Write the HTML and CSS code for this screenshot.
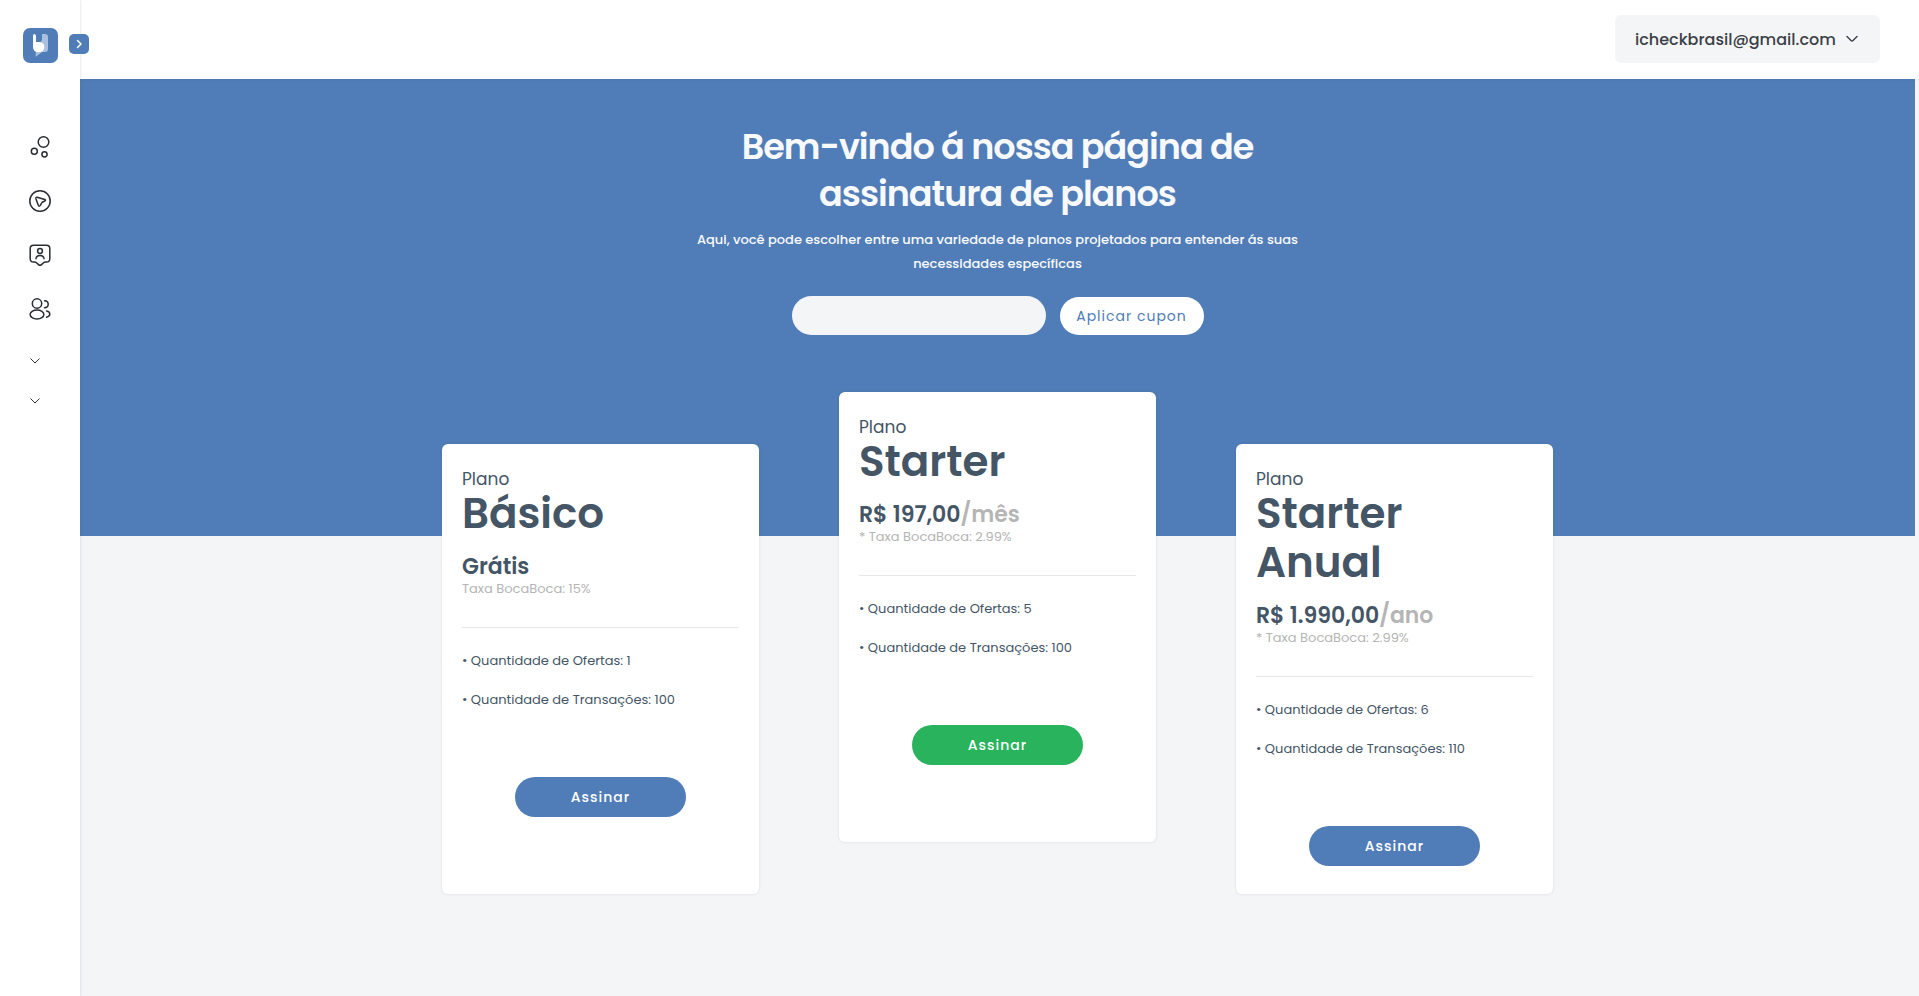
FILE: index.html
```html
<!DOCTYPE html>
<html lang="pt-BR">
<head>
<meta charset="utf-8">
<meta name="viewport" content="width=device-width, initial-scale=1">
<title>Planos</title>
<link rel="stylesheet" href="styles.css">
</head>
<body>
<div class="app">
  <aside class="sidebar">
    <a class="logo" href="#" aria-label="Início">
      <svg width="35" height="35" viewBox="0 0 35 35">
        <rect width="35" height="35" rx="7" fill="#507db7"/>
        <path d="M18 6h4q3 0 3 3v12q0 3-3 3h-2.500q-1 .3-2 1.200l-4.800 3.500V24L17 19z" fill="#a9c0df"/>
        <path d="M13 6h6v5q0 3-3 3h-3z" fill="#507db7"/>
        <path d="M10 7.500Q10 6 11.500 6q1.500.5 1.500 2v6h3.500q4.800.3 4.800 5t-5.300 5.300q-6 0-6-5.300z" fill="#fff"/>
      </svg>
    </a>
    <button class="expand" type="button" aria-label="Expandir menu">
      <svg width="20" height="20" viewBox="0 0 20 20"><path d="M8.500 6.500l3.500 3.500-3.500 3.500" fill="none" stroke="#fff" stroke-width="1.500" stroke-linecap="round" stroke-linejoin="round"/></svg>
    </button>
    <nav class="menu">
      <a class="menu-link" href="#" aria-label="Painel">
        <svg class="icon" viewBox="0 0 24 24"><circle cx="15.500" cy="7" r="5.300"/><circle cx="6.300" cy="16.300" r="3"/><circle cx="16.500" cy="19.300" r="2.600"/></svg>
      </a>
      <a class="menu-link" href="#" aria-label="Ofertas">
        <svg class="icon" viewBox="0 0 24 24"><circle cx="12" cy="12" r="10.200"/><path d="M9.200 8.200l7.500 2.300q1.500.6.200 1.500l-2.700 1.200-1.900 3.200q-1.200 1.600-2-.1L7.900 9.700q-.2-1.800 1.300-1.500z"/></svg>
      </a>
      <a class="menu-link" href="#" aria-label="Perfil">
        <svg class="icon" viewBox="0 0 24 24"><path d="M5.500 2.200h13q3.300 0 3.300 3.300v10.200q0 3.300-3.300 3.300h-1q-1.200 0-2 .8l-2 1.800q-1.500 1.300-3 0l-2-1.800q-.8-.8-2-.8h-1q-3.300 0-3.300-3.300V5.500q0-3.300 3.300-3.300z"/><circle cx="12" cy="8" r="2.400"/><path d="M8 15.800q.3-3.200 4-3.200t4 3.200"/></svg>
      </a>
      <a class="menu-link" href="#" aria-label="Clientes">
        <svg class="icon" viewBox="0 0 24 24"><circle cx="9" cy="6.500" r="4.700"/><ellipse cx="9" cy="17.500" rx="6.900" ry="4.500"/><path d="M16.500 3.800q3.700.2 3.700 3.500t-3.700 3.500M18.500 14q3.300.6 3.300 3.100t-3.300 3.100"/></svg>
      </a>
    </nav>
    <div class="groups">
      <button class="group" type="button" aria-label="Abrir grupo 1"><svg width="10" height="6" viewBox="0 0 10 6"><path d="M.5.500L5 5 9.500.500" fill="none" stroke="#30343b"/></svg></button>
      <button class="group" type="button" aria-label="Abrir grupo 2"><svg width="10" height="6" viewBox="0 0 10 6"><path d="M.5.500L5 5 9.500.500" fill="none" stroke="#30343b"/></svg></button>
    </div>
  </aside>
  <div class="page">
    <header class="topbar">
      <button class="account" type="button">icheckbrasil@gmail.com
        <svg width="12" height="8" viewBox="0 0 12 8"><path d="M1 1.500l4 4q1 1 2 0l4-4" fill="none" stroke="#3b3f46" stroke-width="1.400" stroke-linecap="round"/></svg>
      </button>
    </header>
    <main class="content">
      <section class="hero">
        <h1 class="hero-title">Bem-vindo á nossa página de assinatura de planos</h1>
        <p class="hero-text">Aqui, você pode escolher entre uma variedade de planos projetados para entender ás suas necessidades específicas</p>
        <form class="coupon">
          <input class="coupon-input" type="text" aria-label="Cupom">
          <button class="coupon-button" type="button">Aplicar cupon</button>
        </form>
      </section>
      <section class="plans">
        <article class="card">
          <p class="label">Plano</p>
          <h2 class="name">Básico</h2>
          <p class="price">Grátis</p>
          <p class="fee">Taxa BocaBoca: 15%</p>
          <hr class="rule">
          <ul class="features"><li>• Quantidade de Ofertas: 1</li><li>• Quantidade de Transações: 100</li></ul>
          <button class="subscribe" type="button">Assinar</button>
        </article>
        <article class="card card-featured">
          <p class="label">Plano</p>
          <h2 class="name">Starter</h2>
          <p class="price">R$ 197,00<span class="period">/mês</span></p>
          <p class="fee">* Taxa BocaBoca: 2.99%</p>
          <hr class="rule">
          <ul class="features"><li>• Quantidade de Ofertas: 5</li><li>• Quantidade de Transações: 100</li></ul>
          <button class="subscribe subscribe-green" type="button">Assinar</button>
        </article>
        <article class="card">
          <p class="label">Plano</p>
          <h2 class="name">Starter<br>Anual</h2>
          <p class="price">R$ 1.990,00<span class="period">/ano</span></p>
          <p class="fee">* Taxa BocaBoca: 2.99%</p>
          <hr class="rule">
          <ul class="features"><li>• Quantidade de Ofertas: 6</li><li>• Quantidade de Transações: 110</li></ul>
          <button class="subscribe" type="button">Assinar</button>
        </article>
      </section>
    </main>
  </div>
</div>
</body>
</html>
```
FILE: styles.css
```css
* { box-sizing: border-box; }
body, h1, h2, p, ul { margin: 0; padding: 0; }
body {
  font-family: Poppins, Inter, "Liberation Sans", sans-serif;
  color: #445566;
  background: #f4f5f7;
}
button, input { font: inherit; border: 0; padding: 0; }
button { cursor: pointer; }
svg { display: block; }
ul { list-style: none; }

.app { display: flex; min-height: 100vh; }

.sidebar {
  position: relative;
  z-index: 2;
  flex: 0 0 80px;
  padding-top: 28px;
  background: #fff;
  box-shadow: 0 0 3px rgba(60, 72, 88, .2);
}
.logo { display: block; width: 35px; margin-left: 23px; }
.expand {
  position: absolute;
  top: 34px;
  left: 69px;
  border-radius: 5px;
  background: #507db7;
}
.menu {
  display: flex;
  flex-direction: column;
  align-items: center;
  gap: 30px;
  margin-top: 72px;
}
.icon {
  width: 24px;
  height: 24px;
  fill: none;
  stroke: #292d32;
  stroke-width: 1.5;
  stroke-linecap: round;
  stroke-linejoin: round;
}
.groups { display: flex; flex-direction: column; margin-top: 20px; padding-left: 30px; }
.group { height: 40px; background: none; }

.page { flex: 1; min-width: 0; }
.topbar {
  position: relative;
  z-index: 1;
  display: flex;
  justify-content: flex-end;
  padding: 15px 39px 16px;
  background: #fff;
  box-shadow: 0 0 3px rgba(60, 72, 88, .15);
}
.account {
  display: flex;
  align-items: center;
  justify-content: space-between;
  min-width: 265px;
  height: 48px;
  padding: 0 22px 0 20px;
  border-radius: 6px;
  background: #f4f5f7;
  color: #3b3f46;
  font-size: 16px;
  font-weight: 500;
}
.content { padding-right: 4px; }
.hero {
  display: flex;
  flex-direction: column;
  align-items: center;
  padding: 44px 20px 201px;
  background: #507db7;
  color: #f8f9fc;
  text-align: center;
}
.hero-title { max-width: 600px; font-size: 35px; line-height: 47px; font-weight: 600; letter-spacing: -1px; }
.hero-text { max-width: 620px; margin-top: 11px; font-size: 13px; line-height: 24px; font-weight: 500; }
.coupon { display: flex; align-items: flex-end; gap: 14px; margin-top: 20px; }
.coupon-input { width: 254px; height: 39px; padding: 0 20px; border-radius: 20px; background: #f4f5f7; }
.coupon-button {
  min-width: 144px;
  height: 38px;
  border-radius: 20px;
  background: #fff;
  color: #507db7;
  font-size: 14px;
  letter-spacing: 1px;
}
.plans {
  display: flex;
  justify-content: center;
  align-items: flex-start;
  gap: 80px;
  margin-top: -92px;
  padding-bottom: 80px;
}
.card {
  display: flex;
  flex-direction: column;
  width: 317px;
  min-height: 450px;
  padding: 25px 20px 28px;
  border-radius: 6px;
  background: #fff;
  box-shadow: 0 0 3px rgba(60, 72, 88, .15);
}
.card-featured { margin-top: -52px; }
.label { font-size: 17px; line-height: 20px; }
.name { font-size: 42px; line-height: 49px; font-weight: 600; }
.price { margin-top: 16px; font-size: 22px; line-height: 26px; font-weight: 600; }
.period { color: #b5b5b5; }
.fee { font-size: 13px; line-height: 17px; color: #b5b5b5; }
.rule { width: 100%; height: 1px; margin: 30px 0 13px; border: 0; background: #e6e7e9; }
.features { font-size: 13px; line-height: 39px; }
.subscribe {
  align-self: center;
  width: 171px;
  height: 40px;
  margin-top: 58px;
  border-radius: 20px;
  background: #507db7;
  color: #fff;
  font-size: 14px;
  font-weight: 500;
  letter-spacing: 1px;
}
.subscribe-green { background: #28b35c; }
```
